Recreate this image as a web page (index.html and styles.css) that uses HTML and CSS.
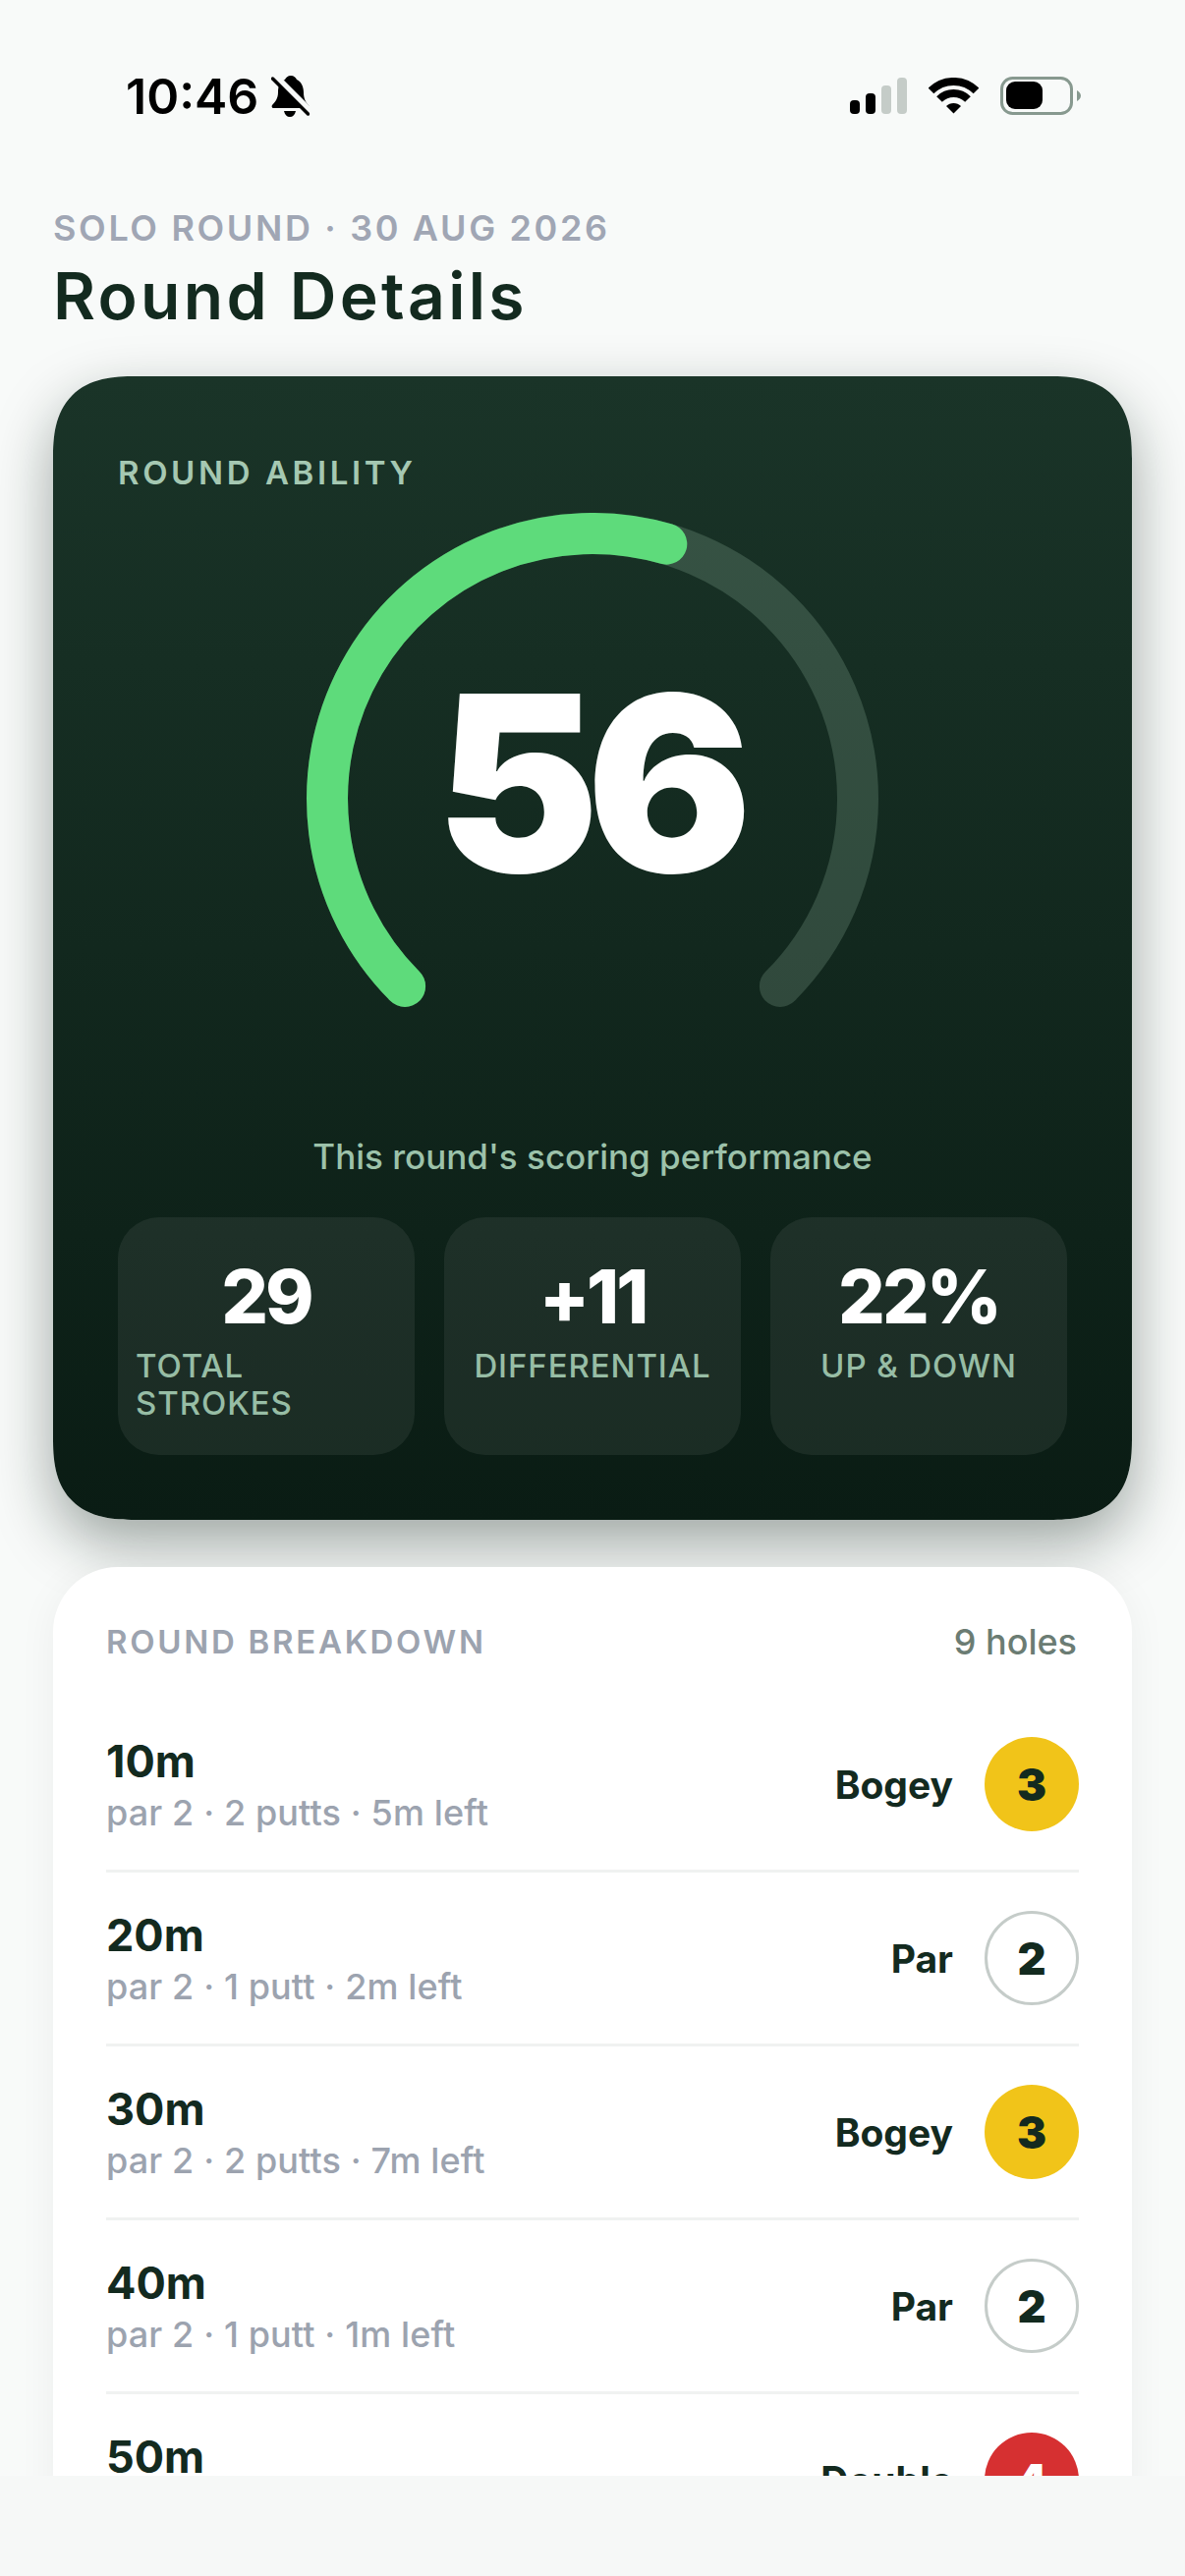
FILE: index.html
```html
<!DOCTYPE html>
<html lang="en">
<head>
    <meta charset="UTF-8">
    <title>Round Details</title>
    <link rel="stylesheet" href="styles.css">
</head>
<body>

<div class="screen">
    <div class="status">
        <div class="status-left">
            <span class="time">10:46</span>
            <svg class="bell" viewBox="0 0 39 43" width="39" height="43">
                <path d="M20 0c-3 0-5 2-6 4C8 6 7 12 7 17c0 6-3 10-6 13-1 1 0 3 1 3h35c2 0 2-2 1-3-3-3-5-7-5-13 0-5-2-11-7-13-1-2-3-4-6-4z"/>
                <path d="M13 36h12c-1 4-3 6-6 6s-5-2-6-6z"/>
                <path class="bell-gap" d="M4 0l37 37"/>
                <path class="bell-slash" d="M1.5 3l36 36"/>
            </svg>
        </div>
        <div class="status-right">
            <div class="signal">
                <span class="bar bar-1"></span>
                <span class="bar bar-2"></span>
                <span class="bar bar-3 off"></span>
                <span class="bar bar-4 off"></span>
            </div>
            <svg class="wifi" viewBox="0 0 51 37" width="51" height="37">
                <path class="wifi-arc" d="M2.5 13.5A32.5 32.5 0 0 1 48.5 13.5"/>
                <path class="wifi-arc" d="M11 22A20.5 20.5 0 0 1 40 22"/>
                <path d="M25.5 36.5L18 29A10.6 10.6 0 0 1 33 29z"/>
            </svg>
            <svg class="battery" viewBox="0 0 82 39" width="82" height="39">
                <rect class="battery-case" x="1.5" y="1.5" width="71" height="36" rx="11"/>
                <rect x="6" y="5" width="37" height="28" rx="9"/>
                <path class="battery-nub" d="M78 14c2 1 4 3 4 5.500s-2 4.500-4 5.500z"/>
            </svg>
        </div>
    </div>

    <div class="header">
        <div class="eyebrow">SOLO ROUND · 30 AUG 2026</div>
        <h1 class="title">Round Details</h1>
    </div>

    <div class="content">
        <div class="hero">
            <div class="hero-label">ROUND ABILITY</div>
            <div class="gauge">
                <svg viewBox="0 0 582 510" width="582" height="510">
                    <path class="gauge-track" d="M100.100 481.900A270 270 0 1 1 481.900 481.900"/>
                    <path class="gauge-value" d="M100.100 481.900A270 270 0 0 1 366.300 31.700"/>
                </svg>
                <div class="gauge-num">56</div>
            </div>
            <div class="hero-caption">This round's scoring performance</div>
            <div class="tiles">
                <div class="tile">
                    <div class="tile-value">29</div>
                    <div class="tile-label">TOTAL<br>STROKES</div>
                </div>
                <div class="tile">
                    <div class="tile-value">+11</div>
                    <div class="tile-label">DIFFERENTIAL</div>
                </div>
                <div class="tile">
                    <div class="tile-value">22%</div>
                    <div class="tile-label">UP &amp; DOWN</div>
                </div>
            </div>
        </div>

        <div class="breakdown">
            <div class="breakdown-head">
                <span class="breakdown-title">ROUND BREAKDOWN</span>
                <span class="breakdown-count">9 holes</span>
            </div>

            <div class="hole">
                <div class="hole-info">
                    <div class="hole-dist">10m</div>
                    <div class="hole-meta">par 2 · 2 putts · 5m left</div>
                </div>
                <div class="hole-result">
                    <span class="hole-name">Bogey</span>
                    <span class="score bogey">3</span>
                </div>
            </div>
            <div class="hole">
                <div class="hole-info">
                    <div class="hole-dist">20m</div>
                    <div class="hole-meta">par 2 · 1 putt · 2m left</div>
                </div>
                <div class="hole-result">
                    <span class="hole-name">Par</span>
                    <span class="score par">2</span>
                </div>
            </div>
            <div class="hole">
                <div class="hole-info">
                    <div class="hole-dist">30m</div>
                    <div class="hole-meta">par 2 · 2 putts · 7m left</div>
                </div>
                <div class="hole-result">
                    <span class="hole-name">Bogey</span>
                    <span class="score bogey">3</span>
                </div>
            </div>
            <div class="hole">
                <div class="hole-info">
                    <div class="hole-dist">40m</div>
                    <div class="hole-meta">par 2 · 1 putt · 1m left</div>
                </div>
                <div class="hole-result">
                    <span class="hole-name">Par</span>
                    <span class="score par">2</span>
                </div>
            </div>
            <div class="hole">
                <div class="hole-info">
                    <div class="hole-dist">50m</div>
                    <div class="hole-meta">par 2 · 2 putts</div>
                </div>
                <div class="hole-result">
                    <span class="hole-name">Double</span>
                    <span class="score double">4</span>
                </div>
            </div>
        </div>
    </div>

    <div class="footer"></div>
</div>

</body>
</html>
```

FILE: styles.css
```css
* {
    box-sizing: border-box;
}

html, body {
    margin: 0;
    padding: 0;
}

body {
    background: #f8faf9;
    font-family: Inter, "Liberation Sans", sans-serif;
    color: #132a1f;
}

.screen {
    width: 1206px;
    height: 2622px;
    display: flex;
    flex-direction: column;
    overflow: hidden;
}

/* status bar */
.status {
    height: 122px;
    padding: 76px 106px 0 128px;
    display: flex;
    justify-content: space-between;
    align-items: flex-start;
    flex: none;
}

.status-left {
    display: flex;
    align-items: center;
    gap: 13px;
}

.time {
    font-size: 50px;
    line-height: 44px;
    font-weight: 600;
    color: #000;
}

.bell {
    fill: #000;
}

.bell-gap {
    fill: none;
    stroke: #f8faf9;
    stroke-width: 6;
}

.bell-slash {
    fill: none;
    stroke: #000;
    stroke-width: 3.5;
    stroke-linecap: round;
}

.status-right {
    display: flex;
    align-items: center;
    gap: 22px;
    padding-top: 2px;
}

.signal {
    display: flex;
    align-items: flex-end;
    gap: 6px;
    height: 37px;
}

.bar {
    width: 10px;
    border-radius: 4px;
    background: #000;
}

.bar.off {
    background: #c5ccc8;
}

.bar-1 { height: 14px; }
.bar-2 { height: 21px; }
.bar-3 { height: 29px; }
.bar-4 { height: 37px; }

.wifi {
    fill: #000;
}

.wifi-arc {
    fill: none;
    stroke: #000;
    stroke-width: 8;
}

.battery-case {
    fill: none;
    stroke: #87998f;
    stroke-width: 3;
}

.battery-nub {
    fill: #87998f;
}

/* page title */
.header {
    padding: 0 54px;
    flex: none;
}

.eyebrow {
    margin-top: 88px;
    font-size: 36px;
    line-height: 44px;
    font-weight: 600;
    letter-spacing: 2.65px;
    color: #a0a6b4;
}

.title {
    margin: 8px 0 0;
    font-size: 66px;
    line-height: 78px;
    font-weight: 600;
    letter-spacing: 3.3px;
    color: #132a1f;
}

/* scroll area */
.content {
    flex: 1;
    min-height: 0;
    overflow: hidden;
    padding: 43px 54px 0;
}

.hero {
    height: 1164px;
    padding: 78px 66px 66px;
    border-radius: 84px;
    corner-shape: superellipse(1.4);
    background: linear-gradient(180deg, #1a3428 0%, #0a1c14 100%);
    box-shadow: 0 24px 60px rgba(10, 28, 20, .38);
    margin-bottom: 48px;
}

.hero-label {
    font-size: 33px;
    line-height: 40px;
    font-weight: 600;
    letter-spacing: 3.6px;
    color: #a5c8b2;
}

.gauge {
    position: relative;
    width: 582px;
    height: 510px;
    margin: 21px auto 0;
}

.gauge svg {
    display: block;
}

.gauge-track,
.gauge-value {
    fill: none;
    stroke-width: 42;
    stroke-linecap: round;
}

.gauge-track {
    stroke: rgba(210, 255, 225, .16);
}

.gauge-value {
    stroke: #5edb7b;
}

.gauge-num {
    position: absolute;
    left: 0;
    right: 10px;
    top: 175px;
    text-align: center;
    font-size: 250px;
    line-height: 200px;
    font-weight: 900;
    letter-spacing: -13px;
    color: #fff;
}

.hero-caption {
    margin-top: 123px;
    font-size: 35px;
    line-height: 44px;
    font-weight: 500;
    text-align: center;
    color: #9cc2aa;
}

.tiles {
    display: grid;
    grid-template-columns: repeat(3, 1fr);
    gap: 30px;
    margin-top: 40px;
}

.tile {
    height: 242px;
    padding: 39px 18px 0;
    border-radius: 42px;
    background: rgba(255, 255, 255, .065);
    display: flex;
    flex-direction: column;
    align-items: center;
}

.tile-value {
    font-size: 75px;
    line-height: 84px;
    font-weight: 800;
    letter-spacing: -3px;
    color: #fff;
}

.tile-label {
    margin-top: 9px;
    align-self: stretch;
    font-size: 33px;
    line-height: 38px;
    font-weight: 500;
    letter-spacing: .9px;
    color: #97bda5;
    text-align: center;
}

.tile:first-child .tile-label {
    text-align: left;
}

/* breakdown list */
.breakdown {
    padding: 54px 54px 0;
    border-radius: 66px;
    background: #fff;
    box-shadow: 0 6px 40px rgba(0, 0, 0, .05);
}

.breakdown-head {
    display: flex;
    justify-content: space-between;
    align-items: center;
    height: 44px;
    margin-bottom: 36px;
}

.breakdown-title {
    font-size: 33px;
    font-weight: 600;
    letter-spacing: 2.7px;
    color: #9ca3af;
}

.breakdown-count {
    margin-right: 2px;
    font-size: 36px;
    font-weight: 500;
    color: #6b7c73;
}

.hole {
    height: 177px;
    display: flex;
    justify-content: space-between;
    align-items: center;
    border-bottom: 3px solid #f0f2f1;
}

.hole-info {
    padding-top: 3px;
}

.hole-dist {
    font-size: 45px;
    line-height: 50px;
    font-weight: 700;
    color: #132a1f;
}

.hole-meta {
    margin-top: 5px;
    font-size: 36px;
    line-height: 44px;
    font-weight: 500;
    letter-spacing: .13px;
    color: #9ca3af;
}

.hole-result {
    display: flex;
    align-items: center;
    gap: 32px;
}

.hole-name {
    font-size: 39px;
    font-weight: 700;
    color: #132a1f;
}

.score {
    width: 96px;
    height: 96px;
    border-radius: 50%;
    display: flex;
    align-items: center;
    justify-content: center;
    font-size: 45px;
    font-weight: 900;
    color: #132a1f;
}

.score.bogey {
    background: #f1c419;
}

.score.par {
    border: 3px solid #c5ccc9;
}

.score.double {
    background: #d63031;
    color: #fff;
}

.footer {
    height: 102px;
    flex: none;
    background: #f6f8f7;
}
```
